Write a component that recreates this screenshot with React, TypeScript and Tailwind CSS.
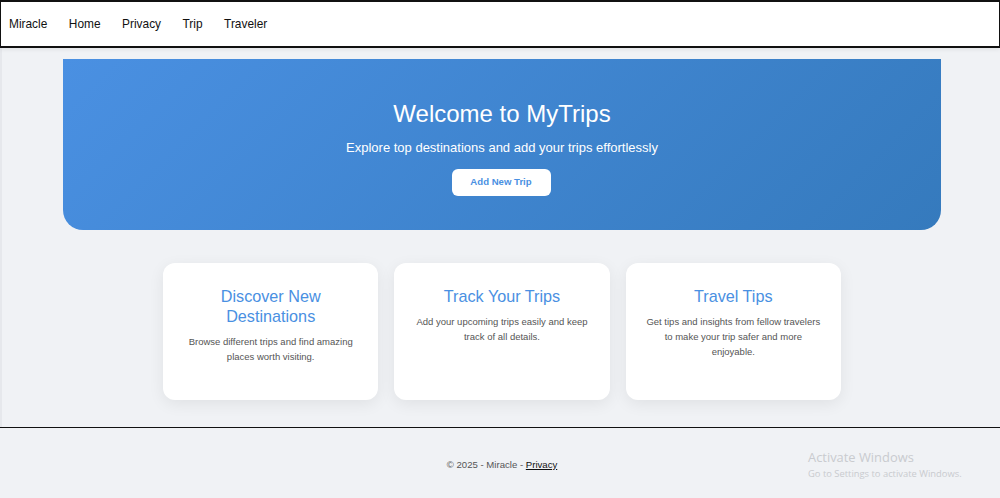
const links = ["Home", "Privacy", "Trip", "Traveler"]

const cards = [
    {
        title: "Discover New Destinations",
        body: "Browse different trips and find amazing places worth visiting.",
    },
    {
        title: "Track Your Trips",
        body: "Add your upcoming trips easily and keep track of all details.",
    },
    {
        title: "Travel Tips",
        body: "Get tips and insights from fellow travelers to make your trip safer and more enjoyable.",
    },
]

const App = () => {
    return (
        <div className="relative flex flex-col h-[498px] w-[1000px] overflow-hidden bg-[#f0f2f5] font-['Liberation_Sans',Arial,sans-serif]">
            <nav className="relative flex flex-row h-[48px] items-center gap-[21.5px] bg-white border-y-2 border-x border-[#111] pl-[8px] pt-[2px] text-[11.9px] text-[#111] shadow-[0_2px_4px_rgba(0,0,0,0.06)]">
                <span>Miracle</span>
                {links.map((link) => (
                    <a key={link}>{link}</a>
                ))}
            </nav>

            <main className="flex flex-col h-[379px] border-l-2 border-[#e6e8ec]">
                <section className="flex flex-col items-center mt-[11px] ml-[61px] mr-[59px] h-[171px] rounded-b-[20px] bg-[linear-gradient(135deg,#4a90e2,#357abd)] text-white pt-[40px]">
                    <h1 className="text-[24px] leading-[30px]">Welcome to MyTrips</h1>
                    <p className="text-[13px] leading-[16px] mt-[11px]">
                        Explore top destinations and add your trips effortlessly
                    </p>
                    <button className="w-[99px] h-[27.5px] mt-[12.5px] mr-[2px] rounded-[6px] bg-white text-[#4a90e2] text-[9.6px] font-bold">
                        Add New Trip
                    </button>
                </section>

                <div className="flex flex-row justify-center gap-[16px] mt-[33px] pl-[2px]">
                    {cards.map((card) => (
                        <div
                            key={card.title}
                            className="flex flex-col items-center w-[215.3px] h-[137px] rounded-[12px] bg-white px-[18px] pt-[23px] text-center shadow-[0_4px_16px_rgba(0,0,0,0.07)]"
                        >
                            <h3 className="text-[16.2px] leading-[20px] text-[#4a90e2]">{card.title}</h3>
                            <p className="text-[9.5px] leading-[15.4px] mt-[7.5px] text-[#555]">{card.body}</p>
                        </div>
                    ))}
                </div>
            </main>

            <footer className="flex items-center justify-center flex-1 border-t border-[#111] pt-[4px] pl-[4px] text-[9.6px] text-[#555]">
                <span>
                    © 2025 - Miracle - <a className="text-[#111] underline">Privacy</a>
                </span>
            </footer>

            <div className="absolute left-[808px] top-[450px] font-['Open_Sans',sans-serif] text-[#c9cbcf]">
                <p className="text-[12.9px] leading-[14px]">Activate Windows</p>
                <p className="text-[9.4px] leading-[12px] mt-[3.5px]">Go to Settings to activate Windows.</p>
            </div>
        </div>
    )
}

export default App
